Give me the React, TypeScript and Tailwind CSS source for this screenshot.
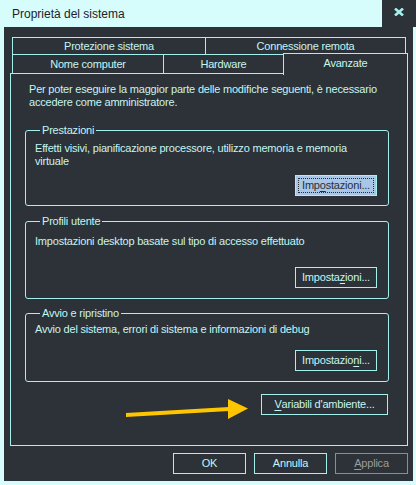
import React from "react";

const line = "border-[#a3f0ec]";
const body = "bg-[#2c3237]";

function Mnemonic({ text, at }: { text: string; at: number }) {
  return (
    <>
      {text.slice(0, at)}
      <span className="underline underline-offset-[2px]">{text[at]}</span>
      {text.slice(at + 1)}
    </>
  );
}

function Button({
  children,
  w = "w-[82px]",
  focused = false,
  disabled = false,
}: {
  children: React.ReactNode;
  w?: string;
  focused?: boolean;
  disabled?: boolean;
}) {
  if (focused) {
    return (
      <div className={`${w} h-[21px] border ${line} bg-[#a9c6e6] p-[2px]`}>
        <div className="h-full border border-dotted border-[#26303a] flex items-center justify-center text-[#26303a]">
          {children}
        </div>
      </div>
    );
  }
  return (
    <div
      className={`${w} h-[21px] border flex items-center justify-center ${
        disabled ? "border-[#8d8d8d] text-[#9c9c9c]" : `${line} text-[#c6f5f3]`
      }`}
    >
      {children}
    </div>
  );
}

function Group({
  title,
  text,
  button,
  className,
  textPad,
  btnGap,
}: {
  title: string;
  text: string;
  button: React.ReactNode;
  className: string;
  textPad: string;
  btnGap: string;
}) {
  return (
    <fieldset className={`border ${line} rounded-[3px] pl-[9px] pr-[11px] ${className}`}>
      <legend className="ml-[5px] px-[2px] leading-[13px]">{title}</legend>
      <p className={`${textPad} leading-[13px]`}>{text}</p>
      <div className={`flex justify-end ${btnGap}`}>{button}</div>
    </fieldset>
  );
}

export default function App() {
  return (
    <div className="w-[416px] h-[485px] bg-[#d6fcfc] flex flex-col font-['Liberation_Sans',Arial,sans-serif] text-[11px] tracking-[-0.2px]">
      {/* Title bar */}
      <div className="h-[27px] flex">
        <div className="flex-1 flex items-center pl-[12px] text-[12px] text-[#1e2226] tracking-normal">
          Proprietà del sistema
        </div>
        <div className={`w-[34px] ${body} flex items-center justify-center pb-[3px]`}>
          <svg width="10" height="8" viewBox="0 0 10 8">
            <path d="M1 0.5 L9 7.5 M9 0.5 L1 7.5" stroke="#a3f0ec" strokeWidth="2.6" />
          </svg>
        </div>
      </div>

      {/* Window body */}
      <div className={`flex-1 ml-[4px] mr-[3px] mb-[4px] ${body} flex flex-col pt-[10px] text-[#c6f5f3]`}>
        {/* Tabs */}
        <div className="ml-[8px] flex h-[18px]">
          <div className={`w-[194px] border ${line} flex items-center justify-center`}>
            Protezione sistema
          </div>
          <div className={`w-[201px] -ml-px border ${line} flex items-center justify-center`}>
            Connessione remota
          </div>
        </div>
        <div className="ml-[8px] flex items-start h-[18px]">
          <div className={`w-[152px] h-[18px] border-x ${line} flex items-center justify-center`}>
            Nome computer
          </div>
          <div className={`w-[121px] -ml-px h-[18px] border-x ${line} flex items-center justify-center`}>
            Hardware
          </div>
          <div
            className={`relative z-10 w-[125px] -ml-px -mt-[2px] h-[22px] border-t border-x ${line} ${body} flex justify-center pt-[1px]`}
          >
            Avanzate
          </div>
        </div>

        {/* Panel */}
        <div className={`ml-[6px] w-[398px] h-[373px] border ${line} flex flex-col`}>
          <p className="pl-[18px] pt-[9px] leading-[13px]">
            Per poter eseguire la maggior parte delle modifiche seguenti, è necessario
            <br />
            accedere come amministratore.
          </p>

          <div className="ml-[14px] w-[364px] flex flex-col">
            <Group
              title="Prestazioni"
              text="Effetti visivi, pianificazione processore, utilizzo memoria e memoria virtuale"
              className="mt-[15px] pb-[9px]"
              textPad="pt-[5px]"
              btnGap="mt-[7px]"
              button={
                <Button focused>
                  <Mnemonic text="Impostazioni..." at={3} />
                </Button>
              }
            />
            <Group
              title="Profili utente"
              text="Impostazioni desktop basate sul tipo di accesso effettuato"
              className="mt-[9px] pb-[10px]"
              textPad="pt-[7px]"
              btnGap="mt-[19px]"
              button={
                <Button>
                  <Mnemonic text="Impostazioni..." at={7} />
                </Button>
              }
            />
            <Group
              title="Avvio e ripristino"
              text="Avvio del sistema, errori di sistema e informazioni di debug"
              className="mt-[8px] pb-[10px]"
              textPad="pt-[3px]"
              btnGap="mt-[14px]"
              button={
                <Button>
                  <Mnemonic text="Impostazioni..." at={10} />
                </Button>
              }
            />

            <div className="flex justify-end items-start mt-[12px] mr-[1px]">
              <svg width="124" height="22" viewBox="0 0 124 22" className="mt-[4px] mr-[12px]">
                <polygon points="1,15 104,9 104,13 1,19" fill="#fdc600" />
                <polygon points="103,1 123,10.5 103,21" fill="#fdc600" />
              </svg>
              <Button w="w-[127px]">
                <Mnemonic text="Variabili d'ambiente..." at={0} />
              </Button>
            </div>
          </div>
        </div>

        {/* Dialog buttons */}
        <div className="flex justify-end gap-[8px] mt-[7px] pr-[5px]">
          <Button w="w-[73px]">OK</Button>
          <Button w="w-[73px]">Annulla</Button>
          <Button w="w-[73px]" disabled>
            <Mnemonic text="Applica" at={0} />
          </Button>
        </div>
      </div>
    </div>
  );
}
